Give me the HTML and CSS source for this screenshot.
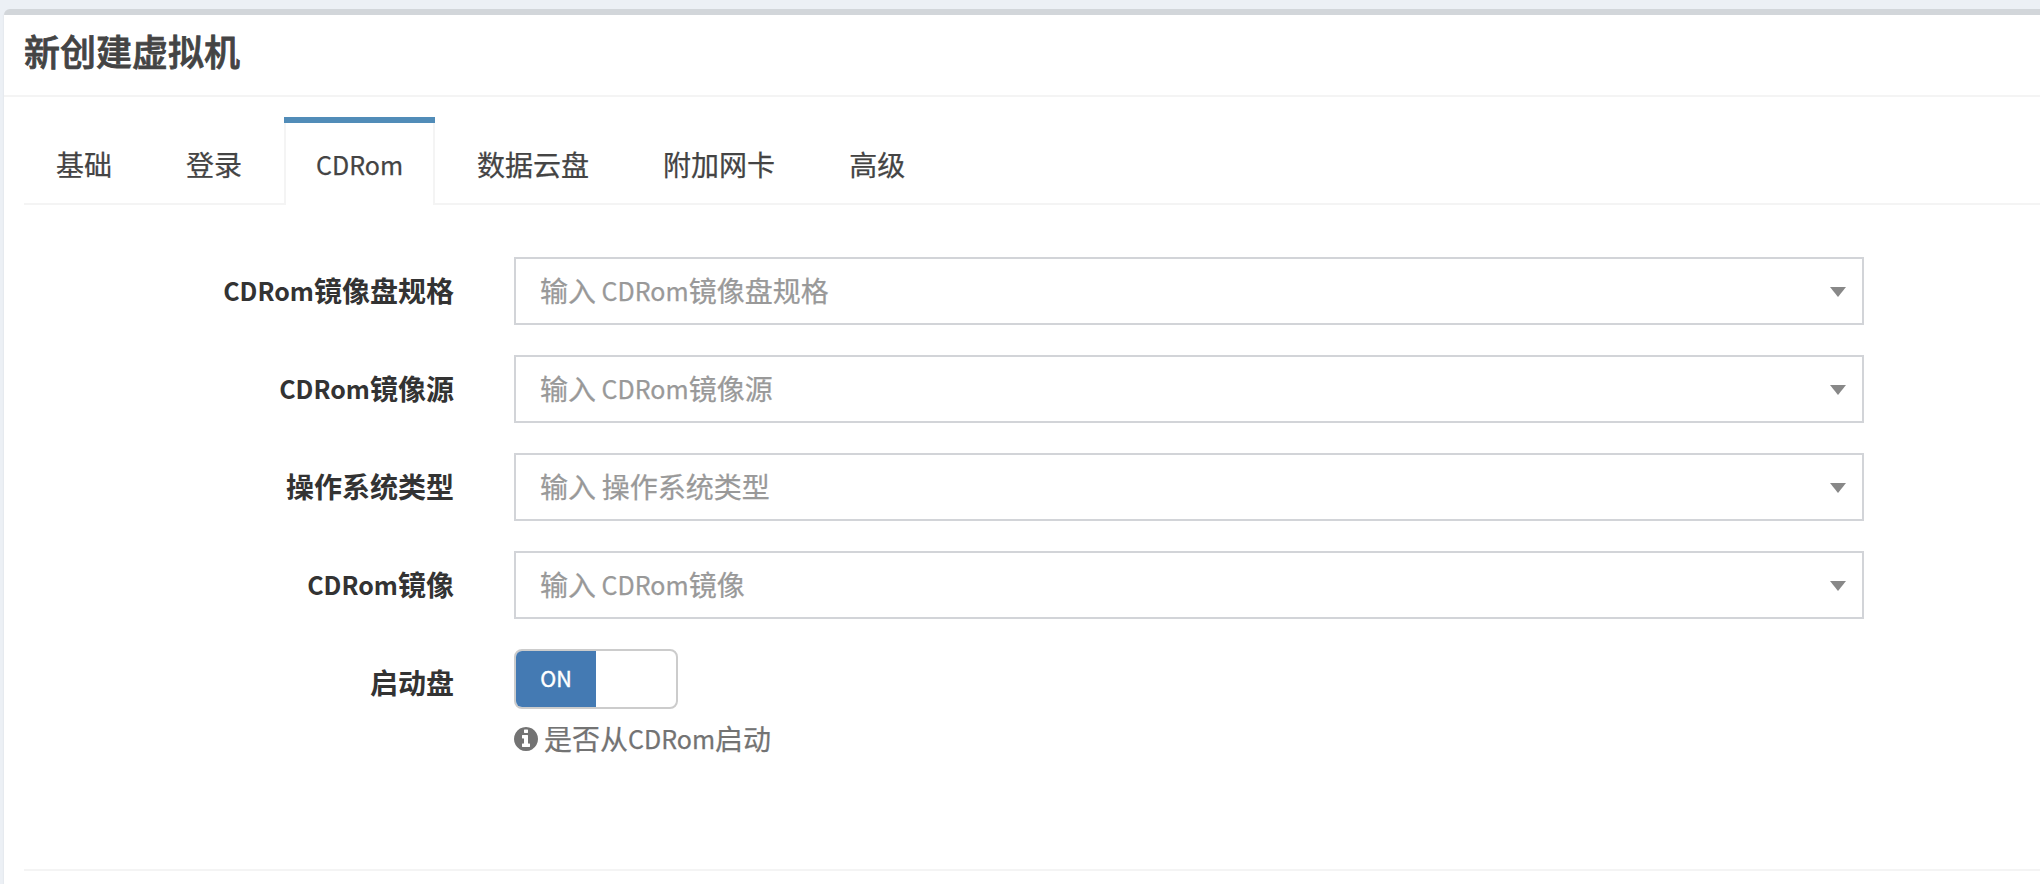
FILE: index.html
```html
<!DOCTYPE html>
<html lang="zh-CN">
<head>
<meta charset="utf-8">
<title>新创建虚拟机</title>
<link rel="stylesheet" href="styles.css">
</head>
<body>
<section class="box">
  <header class="box-header"><h3 class="box-title">新创建虚拟机</h3></header>
  <form class="box-body">
    <nav class="tabs">
      <a class="tab">基础</a>
      <a class="tab">登录</a>
      <a class="tab tab-active"><span class="latin">CDRom</span></a>
      <a class="tab">数据云盘</a>
      <a class="tab">附加网卡</a>
      <a class="tab">高级</a>
    </nav>
    <div class="fields">
      <div class="row"><label class="label"><span class="latin">CDRom</span>镜像盘规格</label><div class="select"><span class="placeholder">输入<span class="latin"> CDRom</span>镜像盘规格</span><i class="caret"></i></div></div>
      <div class="row"><label class="label"><span class="latin">CDRom</span>镜像源</label><div class="select"><span class="placeholder">输入<span class="latin"> CDRom</span>镜像源</span><i class="caret"></i></div></div>
      <div class="row"><label class="label">操作系统类型</label><div class="select"><span class="placeholder">输入<span class="latin"> </span>操作系统类型</span><i class="caret"></i></div></div>
      <div class="row"><label class="label"><span class="latin">CDRom</span>镜像</label><div class="select"><span class="placeholder">输入<span class="latin"> CDRom</span>镜像</span><i class="caret"></i></div></div>
      <div class="row">
        <label class="label">启动盘</label>
        <div class="control">
          <div class="switch"><span class="switch-on">ON</span></div>
          <div class="help">
            <svg class="info" viewBox="0 0 1536 1536"><path fill="currentColor" d="M1024 1248v-160q0-14-9-23t-23-9h-96V544q0-14-9-23t-23-9H544q-14 0-23 9t-9 23v160q0 14 9 23t23 9h96v320h-96q-14 0-23 9t-9 23v160q0 14 9 23t23 9h448q14 0 23-9t9-23zM896 352V192q0-14-9-23t-23-9H672q-14 0-23 9t-9 23v160q0 14 9 23t23 9h192q14 0 23-9t9-23zM1536 768q0 209-103 385.500T1153.500 1433 768 1536t-385.500-103T103 1153.500 0 768t103-385.500T382.500 103 768 0t385.500 103T1433 382.500 1536 768z"/></svg>
            <span class="help-text">是否从<span class="latin">CDRom</span>启动</span>
          </div>
        </div>
      </div>
    </div>
    <hr class="divider">
  </form>
</section>
</body>
</html>
```
FILE: styles.css
```css
* { box-sizing: border-box; }
body {
  margin: 0;
  padding: 9px 0 0 4px;
  height: 884px;
  overflow: hidden;
  background: #ecf0f5;
  color: #333;
  font: 28px/40px "Noto Sans CJK SC", sans-serif;
}
.latin {
  font-size: 25px;
  line-height: 1;
  vertical-align: 1px;
}
.box {
  height: 900px;
  background: #fff;
  border-top: 6px solid #d2d6da;
  border-radius: 6px 0 0 0;
  box-shadow: 0 2px 2px rgba(0, 0, 0, 0.1);
}
.box-header {
  height: 82px;
  padding: 17px 20px 0;
  border-bottom: 2px solid #f4f4f4;
}
.box-title {
  margin: 0;
  color: #444;
  font-size: 36px;
  font-weight: 500;
  line-height: 36px;
  -webkit-text-stroke: 0.8px #444;
}
.box-body { padding: 20px 0 0 20px; }
.tabs {
  display: flex;
  gap: 10px;
  height: 88px;
  border-bottom: 2px solid #f4f4f4;
}
.tab {
  height: 88px;
  padding: 25px 30px 0;
  border: 2px solid transparent;
  border-bottom: 0;
  color: #444;
  white-space: nowrap;
  -webkit-text-stroke: 0.25px #444;
}
.tab-active {
  padding-top: 0;
  background: #fff;
  border: solid #f4f4f4;
  border-width: 0 2px;
}
.tab-active::before {
  content: "";
  display: block;
  height: 6px;
  margin: 0 -32px 21px;
  background: #518cb8;
}
.fields {
  display: flex;
  flex-direction: column;
  gap: 30px;
  height: 664px;
  padding-top: 52px;
}
.row {
  display: grid;
  grid-template-columns: 430px 1350px;
  column-gap: 60px;
}
.label {
  padding-top: 13px;
  font-weight: 700;
  text-align: right;
}
.select {
  display: flex;
  align-items: flex-start;
  justify-content: space-between;
  height: 68px;
  padding: 11px 16px 0 24px;
  border: 2px solid #d2d4d8;
  color: #999;
  -webkit-text-stroke: 0.25px #999;
}
.placeholder { white-space: pre; }
.caret {
  margin-top: 17px;
  border: solid transparent;
  border-width: 10px 8px 0;
  border-top-color: #888;
}
.switch {
  width: 164px;
  height: 60px;
  overflow: hidden;
  border: 2px solid #ccc;
  border-radius: 8px;
}
.switch-on {
  display: block;
  width: 80px;
  height: 56px;
  background: #447ab3;
  color: #fff;
  font-size: 21.5px;
  line-height: 53px;
  text-align: center;
  -webkit-text-stroke: 0.4px #fff;
}
.help {
  display: flex;
  gap: 6px;
  margin-top: 9px;
  color: #737373;
  -webkit-text-stroke: 0.25px #737373;
}
.info {
  width: 24px;
  height: 24px;
  margin-top: 9px;
}
.divider {
  height: 2px;
  margin: 0;
  border: 0;
  background: #f4f4f4;
}
```
